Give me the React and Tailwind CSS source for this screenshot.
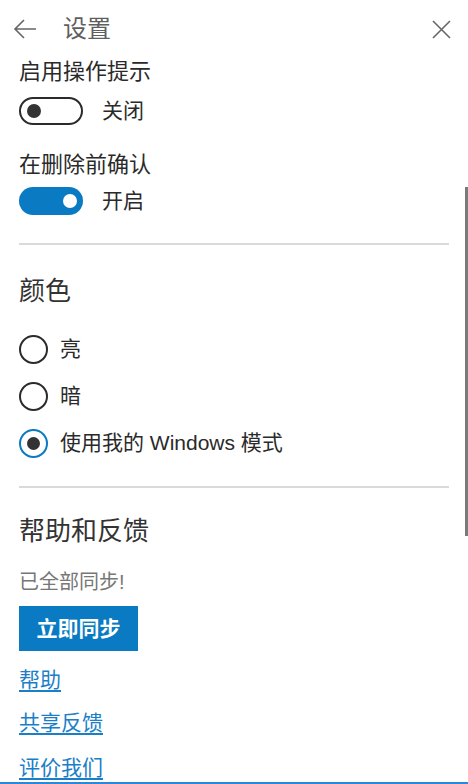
import React, { useState } from "react";

const font = { fontFamily: '"Liberation Sans", "Noto Sans CJK SC", sans-serif' };

function Toggle({ on, onClick }) {
  return (
    <button
      onClick={onClick}
      className={`relative w-[64px] h-[28px] rounded-full shrink-0 ${on ? "bg-[#0a7bc2]" : "border-[2.5px] border-[#2b2b2b] bg-white"}`}
    >
      <span
        className={`absolute top-1/2 -translate-y-1/2 w-[14px] h-[14px] rounded-full ${on ? "right-[6px] bg-white" : "left-[6px] bg-[#333]"}`}
      />
    </button>
  );
}

function Radio({ checked, label, onClick }) {
  return (
    <button onClick={onClick} className="flex items-center h-[30px] text-left">
      <span
        className={`w-[29px] h-[29px] rounded-full border-[2.5px] flex items-center justify-center shrink-0 ${checked ? "border-[#0a7bc2]" : "border-[#2b2b2b]"}`}
      >
        {checked && <span className="w-[13px] h-[13px] rounded-full bg-[#333]" />}
      </span>
      <span className="ml-[12px] text-[21px] leading-[28px] text-[#2a2a2a]">{label}</span>
    </button>
  );
}

export default function App() {
  const [tips, setTips] = useState(false);
  const [confirm, setConfirm] = useState(true);
  const [mode, setMode] = useState("windows");

  return (
    <div className="relative w-[468px] h-[784px] overflow-hidden bg-white border-b-2 border-[#2b88d8]" style={font}>
      {/* Header */}
      <div className="h-[58px] flex items-center pl-[13px] pr-[17px]">
        <svg width="24" height="20" viewBox="0 0 24 20" fill="none" stroke="#666" strokeWidth="1.6">
          <path d="M23 10H2M11 1L2 10l9 9" />
        </svg>
        <span className="ml-[26px] text-[24px] leading-none text-[#5f5f5f]">设置</span>
        <svg className="ml-auto" width="19" height="19" viewBox="0 0 19 19" stroke="#666" strokeWidth="1.6">
          <path d="M1 1l17 17M18 1L1 18" />
        </svg>
      </div>

      <div className="flex flex-col px-[19px]">
        <div className="text-[22px] leading-[28px] text-[#2a2a2a]">启用操作提示</div>
        <div className="mt-[11px] flex items-center h-[28px]">
          <Toggle on={tips} onClick={() => setTips(!tips)} />
          <span className="ml-[19px] text-[21px] leading-[28px] text-[#2a2a2a]">{tips ? "开启" : "关闭"}</span>
        </div>

        <div className="mt-[26px] text-[22px] leading-[28px] text-[#2a2a2a]">在删除前确认</div>
        <div className="mt-[8px] flex items-center h-[28px]">
          <Toggle on={confirm} onClick={() => setConfirm(!confirm)} />
          <span className="ml-[19px] text-[21px] leading-[28px] text-[#2a2a2a]">{confirm ? "开启" : "关闭"}</span>
        </div>

        <div className="mt-[28px] h-[2px] bg-[#dadada]" />

        <div className="mt-[28px] text-[26px] leading-[36px] text-[#333]">颜色</div>
        <div className="mt-[25px] flex flex-col gap-[17px]">
          <Radio checked={mode === "light"} label="亮" onClick={() => setMode("light")} />
          <Radio checked={mode === "dark"} label="暗" onClick={() => setMode("dark")} />
          <Radio checked={mode === "windows"} label="使用我的 Windows 模式" onClick={() => setMode("windows")} />
        </div>

        <div className="mt-[28px] h-[2px] bg-[#dadada]" />

        <div className="mt-[25px] text-[26px] leading-[36px] text-[#333]">帮助和反馈</div>
        <div className="mt-[19px] text-[20px] leading-[28px] text-[#777]">已全部同步!</div>
        <button className="mt-[10px] w-[119px] h-[45px] bg-[#0a7bc2] text-white text-[21px] font-bold">立即同步</button>

        <a href="#" className="mt-[15px] self-start text-[21px] leading-[28px] text-[#1b7fc8] underline underline-offset-[3px]">帮助</a>
        <a href="#" className="mt-[15px] self-start text-[21px] leading-[28px] text-[#1b7fc8] underline underline-offset-[3px]">共享反馈</a>
        <a href="#" className="mt-[17px] self-start text-[21px] leading-[28px] text-[#1b7fc8] underline underline-offset-[3px]">评价我们</a>
      </div>

      {/* scrollbar thumb */}
      <div className="absolute right-0 top-[187px] w-[3px] h-[349px] bg-[#7a7a7a]" />
    </div>
  );
}
